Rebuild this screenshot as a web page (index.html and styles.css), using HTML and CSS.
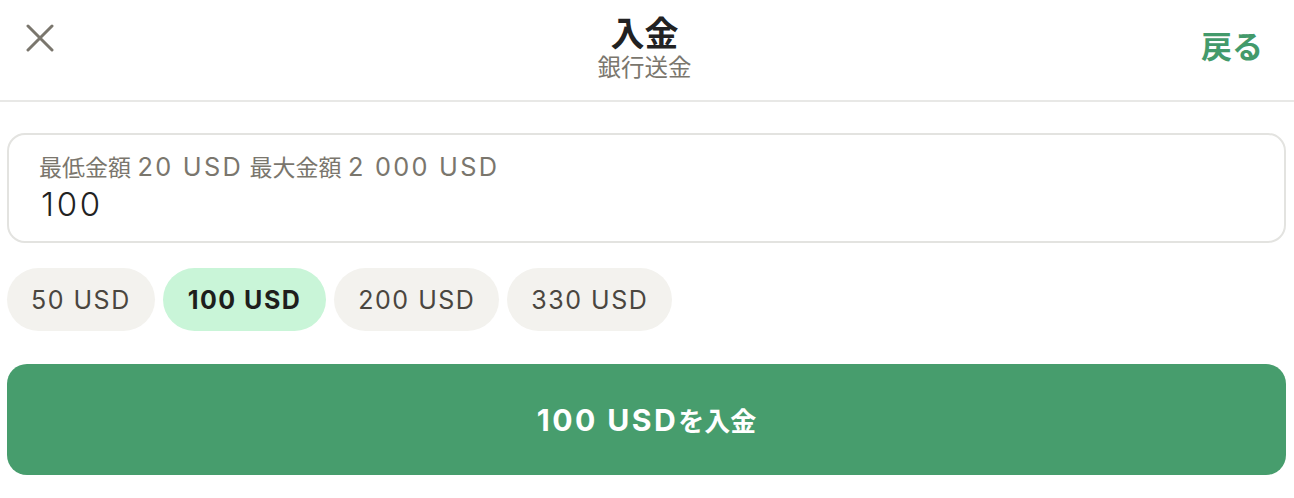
FILE: index.html
```html
<!DOCTYPE html>
<html lang="ja">
<head>
    <meta charset="UTF-8">
    <meta name="viewport" content="width=device-width, initial-scale=1.0">
    <title>入金</title>
    <link rel="stylesheet" href="styles.css">
</head>
<body>
    <header class="header">
        <button class="close-btn" aria-label="閉じる">
            <svg width="28" height="28" viewBox="0 0 28 28">
                <path d="M2 2 L26 26 M26 2 L2 26" stroke="#7a766d" stroke-width="3" stroke-linecap="round" fill="none"/>
            </svg>
        </button>
        <div class="title-box">
            <div class="title">入金</div>
            <div class="subtitle">銀行送金</div>
        </div>
        <a class="back-link" href="#">戻る</a>
    </header>

    <main class="content">
        <label class="amount-field">
            <span class="amount-label">最低金額 <span class="lat">20 USD</span> 最大金額 <span class="lat">2 000 USD</span></span>
            <input class="amount-input" type="text" value="100">
        </label>

        <div class="chips">
            <button class="chip">50 USD</button>
            <button class="chip chip-active">100 USD</button>
            <button class="chip">200 USD</button>
            <button class="chip">330 USD</button>
        </div>

        <button class="submit-btn"><span class="lat">100 USD</span>を入金</button>
    </main>
</body>
</html>
```

FILE: styles.css
```css
/* 基本 */
body {
    margin: 0;
    font-family: Inter, "Noto Sans CJK JP", sans-serif;
    background-color: #fff;
    color: #222;
}

.header {
    height: 100px;
    display: grid;
    grid-template-columns: 1fr auto 1fr;
    align-items: center;
    padding: 0 31px 0 26px;
    border-bottom: 2px solid #e8e8e6;
}

.close-btn {
    width: 28px;
    height: 28px;
    padding: 0;
    border: none;
    background: none;
    cursor: pointer;
    margin-top: -24px;
}

.close-btn svg {
    display: block;
}

.title-box {
    text-align: center;
    margin-top: -5px;
}

.title {
    font-size: 34px;
    font-weight: 700;
    line-height: 40px;
    color: #222;
}

.subtitle {
    font-size: 23.5px;
    line-height: 28px;
    color: #7a766d;
}

.back-link {
    justify-self: end;
    font-size: 31px;
    font-weight: 700;
    color: #439a6b;
    text-decoration: none;
    margin-top: -12px;
}

.content {
    padding: 31px 8px 0 7px;
}

.amount-field {
    display: flex;
    flex-direction: column;
    border: 2px solid #e3e3e0;
    border-radius: 18px;
    padding: 16px 30px;
    height: 110px;
    box-sizing: border-box;
}

.amount-label {
    font-size: 23px;
    line-height: 32px;
    color: #7a766d;
}

.lat {
    font-size: 1.1em;
    letter-spacing: 0.09em;
}

.amount-input {
    border: none;
    outline: none;
    padding: 0 0 0 2px;
    font-family: inherit;
    font-size: 33px;
    letter-spacing: 2.7px;
    line-height: 40px;
    height: 40px;
    color: #222;
    background: none;
    font-weight: 300;
}

.chips {
    display: flex;
    gap: 8px;
    margin-top: 25px;
}

.chip {
    height: 63px;
    padding: 0 24px;
    border: none;
    border-radius: 32px;
    background-color: #f3f2ee;
    font-family: inherit;
    font-size: 25px;
    letter-spacing: 1.5px;
    color: #4a463f;
    cursor: pointer;
}

.chip-active {
    background-color: #c9f5d8;
    color: #1e1e1c;
    font-weight: 700;
    padding: 0 25px;
}

.submit-btn {
    display: block;
    width: 100%;
    height: 111px;
    margin-top: 33px;
    border: none;
    border-radius: 20px;
    background-color: #479d6d;
    color: #fff;
    font-family: inherit;
    font-size: 26px;
    font-weight: 700;
    cursor: pointer;
}

.submit-btn .lat {
    font-size: 1.16em;
    letter-spacing: 0.08em;
}
```
